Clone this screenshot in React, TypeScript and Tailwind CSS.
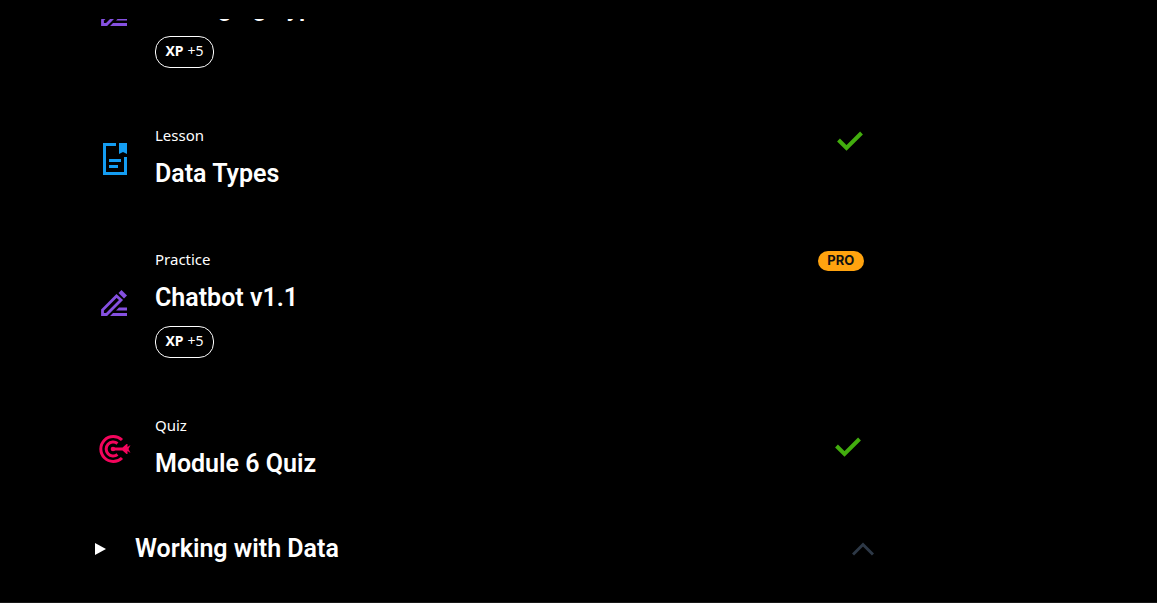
import React from "react";

type Kind = "Lesson" | "Practice" | "Quiz";
type Status = "done" | "pro";
interface Item {
  kind: Kind;
  title: string;
  xp?: number;
  status?: Status;
}

const items: Item[] = [
  { kind: "Practice", title: "Managing Types", xp: 5 },
  { kind: "Lesson", title: "Data Types", status: "done" },
  { kind: "Practice", title: "Chatbot v1.1", xp: 5, status: "pro" },
  { kind: "Quiz", title: "Module 6 Quiz", status: "done" },
];

function KindIcon({ kind }: { kind: Kind }) {
  if (kind === "Lesson") {
    return (
      <svg width="24" height="32" viewBox="0 0 24 32" fill="none" aria-hidden="true">
        <path d="M13 1.5H1.5V30.5H22.5V14" stroke="#149df2" strokeWidth="3" />
        <path d="M16 0H24V11L20 9L16 11Z" fill="#149df2" />
        <path d="M6 17.5H18M6 23.5H15" stroke="#149df2" strokeWidth="3" />
      </svg>
    );
  }
  if (kind === "Practice") {
    return (
      <svg width="28" height="28" viewBox="0 0 28 28" fill="none" aria-hidden="true">
        <path d="M1.5 24.5V20L15.5 6L20 10L5.5 24.5Z" stroke="#8550e0" strokeWidth="2.8" />
        <path d="M17.5 3L20.5 0L26 5.5L23 8.5Z" fill="#8550e0" />
        <path d="M18 17.5H26V20.5H15ZM12 23H26V26H9Z" fill="#8550e0" />
      </svg>
    );
  }
  return (
    <svg width="32" height="28" viewBox="0 0 32 28" fill="none" aria-hidden="true">
      <path d="M23 5A12.5 12.5 0 1 0 23 23" stroke="#f4055c" strokeWidth="3" />
      <path d="M18.5 8.5A7 7 0 1 0 18.5 19.5" stroke="#f4055c" strokeWidth="3" />
      <circle cx="14" cy="14" r="2.3" fill="#f4055c" />
      <path d="M14 12.5H23.5L27.5 9H28.5V12L31.5 10L29.5 14L31.5 18L28.5 16V19H27.5L23.5 15.5H14Z" fill="#f4055c" />
    </svg>
  );
}

function Check() {
  return (
    <svg width="26" height="20" viewBox="0 0 26 20" fill="none" role="img" aria-label="Completed">
      <path d="M1.5 9L9.5 17L24.5 2" stroke="#42ad0e" strokeWidth="4" />
    </svg>
  );
}

function Row({ kind, title, xp, status }: Item) {
  return (
    <li className="flex items-center pt-[30px] pb-[28px]">
      <div className="flex w-[60px] shrink-0 justify-center pr-5">
        <KindIcon kind={kind} />
      </div>
      <div className="min-w-0 flex-1">
        <p className="text-[15px] leading-[19px]">{kind}</p>
        <h3 className="mt-[11px] font-['Roboto',sans-serif] text-[25px] leading-9 font-semibold">{title}</h3>
        {xp !== undefined && (
          <p className="mt-2.5 flex h-8 w-[59px] items-center justify-center gap-1 rounded-[15px] border border-white pb-0.5 text-sm">
            <b>XP</b>
            <span>+{xp}</span>
          </p>
        )}
      </div>
      {status === "done" && (
        <div className={kind === "Lesson" ? "mt-[5px] mr-[5px] self-start" : "mr-[7px] mb-1"}>
          <Check />
        </div>
      )}
      {status === "pro" && (
        <span className="mt-px mr-1 flex h-5 w-[46px] items-center justify-center self-start rounded-full bg-[#ffa30f] font-['Inter',sans-serif] text-[13px] font-bold text-[#101010]">
          PRO
        </span>
      )}
    </li>
  );
}

export default function App() {
  return (
    <main className="flex min-h-screen flex-col border-b border-[#181818] bg-black pt-[19px] font-['Noto_Sans',sans-serif] text-white">
      <section className="w-3/4 overflow-hidden">
        <ul className="-mt-[89px] pl-[95px]">
          {items.map((item) => (
            <Row key={item.title} {...item} />
          ))}
        </ul>
      </section>
      <button type="button" className="mt-[21px] flex w-3/4 items-center pl-[95px] text-left">
        <svg width="11" height="12" viewBox="0 0 11 12" className="mr-[29px]" aria-hidden="true">
          <path d="M0 0L11 6L0 12Z" fill="white" />
        </svg>
        <span className="flex-1 font-['Roboto',sans-serif] text-[25px] leading-9 font-semibold">Working with Data</span>
        <svg width="22" height="14" viewBox="0 0 22 14" fill="none" className="-mr-1.5" aria-hidden="true">
          <path d="M1 12.5L11 2.5L21 12.5" stroke="#2d3846" strokeWidth="3" />
        </svg>
      </button>
    </main>
  );
}
